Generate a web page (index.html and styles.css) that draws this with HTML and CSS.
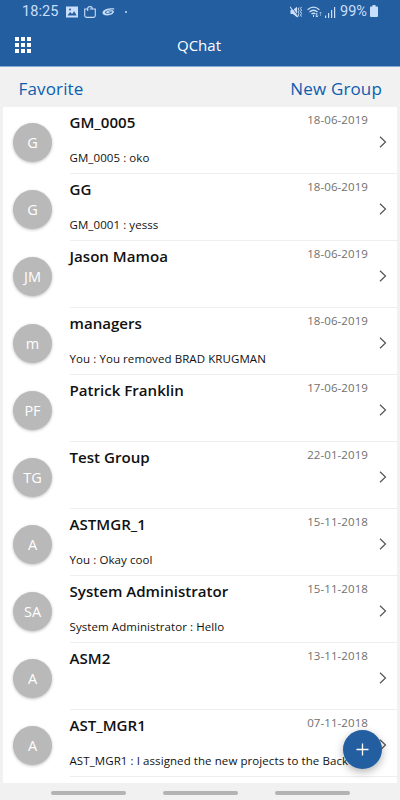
FILE: index.html
```html
<!DOCTYPE html>
<html lang="en">
<head>
<meta charset="utf-8">
<title>QChat</title>
<link rel="stylesheet" href="styles.css">
</head>
<body>
<div class="app">
  <header class="top">
    <div class="status">
      <div class="status-left">
        <span class="time">18:25</span>
        <svg class="st-image" width="12" height="12" viewBox="0 0 12 12"><path fill="#c9defa" d="M0 .5h12v11H0z"/><path fill="#235ea1" d="M1.500 9.500l2.600-3.600 2 2 2-2.600 2.600 4.200z"/><circle cx="4" cy="3.600" r="1" fill="#235ea1"/></svg>
        <svg class="st-bag" width="12" height="12" viewBox="0 0 12 12" fill="none" stroke="#c9defa" stroke-width="1.100"><path d="M3.700 3H.7v6.500q0 1.900 1.900 1.900h6.800q1.900 0 1.900-1.900V3H8.300M3.700 5V2.500Q3.700.6 6 .6t2.300 1.900V3H5.800"/></svg>
        <svg class="st-g" width="13" height="10" viewBox="0 0 13 10"><path fill="#c9defa" fill-rule="evenodd" d="M12.300 1.500C9 .8.5 2 .5 6c0 3.600 10.500 3.200 11.500-1.200.3-1.300-1.500-1.800-3.500-1.600C5.500 3.500 4 4.600 4.200 5.500c.2 1 3 .8 4.300-.3H6.300l.5-.8h3.700C10 6.900 3.200 7.700 3 5.600 2.800 3.500 8 2 12.300 2.500z"/></svg>
        <span class="dot"></span>
      </div>
      <div class="status-right">
        <svg width="13" height="12" viewBox="0 0 13 12"><path fill="#c9defa" d="M.5 4h2.300L7 .7v10.600L2.800 8H.5z"/><path d="M1.300 .5l7.500 10.500" stroke="#235ea1" stroke-width="1"/><path d="M0 .8l7.800 10.400" stroke="#c9defa" stroke-width="1.100"/><path d="M9 1.500l-1 1.500 1 1.500-1 1.500 1 1.500-1 1.500 1 1.500M11.500 1l-1 1.600 1 1.600-1 1.600 1 1.600-1 1.600 1 1.600" fill="none" stroke="#c9defa" stroke-width="1"/></svg>
        <svg class="st-wifi" width="16" height="12" viewBox="0 0 16 12" fill="none" stroke="#c9defa" stroke-width="1.300"><path d="M.6 3.800Q6.500-1.500 12.400 3.800M2.500 6Q6.500 2.500 10.500 6M4.500 8.100q2-1.700 4 0"/><path d="M6.500 9v2M9.800 7v4M8.500 9.700l1.300 1.300 1.300-1.300" stroke-width="1"/><path d="M13.500 10V6M12.300 7.300l1.200-1.300 1.200 1.300" stroke-width="1" opacity=".5"/></svg>
        <svg class="st-signal" width="11" height="12" viewBox="0 0 11 12" fill="#c9defa"><path d="M0 9.500h1.200V12H0zM3 7h1.200v5H3zM6 4h1.200v8H6zM9 1h1.200v11H9z"/></svg>
        <span class="pct">99%</span>
        <svg class="st-battery" width="8" height="12" viewBox="0 0 8 12"><path fill="#c9defa" d="M2.500 0h3v1.500H7q1 0 1 1V11q0 1-1 1H1q-1 0-1-1V2.500q0-1 1-1h1.500z"/></svg>
      </div>
    </div>
    <div class="bar">
      <svg class="grid" width="16" height="16" viewBox="0 0 16 16" fill="#fff"><path d="M0 0h4v4H0zM6 0h4v4H6zM12 0h4v4h-4zM0 6h4v4H0zM6 6h4v4H6zM12 6h4v4h-4zM0 12h4v4H0zM6 12h4v4H6zM12 12h4v4h-4z"/></svg>
      <h1 class="title">QChat</h1>
    </div>
  </header>
  <nav class="links"><a class="fav">Favorite</a><a class="new">New Group</a></nav>
  <main class="list">
    <div class="row"><div class="avatar">G</div><div class="body"><div class="text"><b class="name">GM_0005</b><p class="msg">GM_0005 : oko</p></div><time class="date">18-06-2019</time><svg class="chev" width="8" height="12" viewBox="0 0 8 12"><path d="M1 .8L6.500 6 1 11.200"/></svg></div></div>
    <div class="row"><div class="avatar">G</div><div class="body"><div class="text"><b class="name">GG</b><p class="msg">GM_0001 : yesss</p></div><time class="date">18-06-2019</time><svg class="chev" width="8" height="12" viewBox="0 0 8 12"><path d="M1 .8L6.500 6 1 11.200"/></svg></div></div>
    <div class="row"><div class="avatar">JM</div><div class="body"><div class="text"><b class="name">Jason Mamoa</b></div><time class="date">18-06-2019</time><svg class="chev" width="8" height="12" viewBox="0 0 8 12"><path d="M1 .8L6.500 6 1 11.200"/></svg></div></div>
    <div class="row"><div class="avatar">m</div><div class="body"><div class="text"><b class="name">managers</b><p class="msg">You : You removed BRAD KRUGMAN</p></div><time class="date">18-06-2019</time><svg class="chev" width="8" height="12" viewBox="0 0 8 12"><path d="M1 .8L6.500 6 1 11.200"/></svg></div></div>
    <div class="row"><div class="avatar">PF</div><div class="body"><div class="text"><b class="name">Patrick Franklin</b></div><time class="date">17-06-2019</time><svg class="chev" width="8" height="12" viewBox="0 0 8 12"><path d="M1 .8L6.500 6 1 11.200"/></svg></div></div>
    <div class="row"><div class="avatar">TG</div><div class="body"><div class="text"><b class="name">Test Group</b></div><time class="date">22-01-2019</time><svg class="chev" width="8" height="12" viewBox="0 0 8 12"><path d="M1 .8L6.500 6 1 11.200"/></svg></div></div>
    <div class="row"><div class="avatar">A</div><div class="body"><div class="text"><b class="name">ASTMGR_1</b><p class="msg">You : Okay cool</p></div><time class="date">15-11-2018</time><svg class="chev" width="8" height="12" viewBox="0 0 8 12"><path d="M1 .8L6.500 6 1 11.200"/></svg></div></div>
    <div class="row"><div class="avatar">SA</div><div class="body"><div class="text"><b class="name">System Administrator</b><p class="msg">System Administrator : Hello</p></div><time class="date">15-11-2018</time><svg class="chev" width="8" height="12" viewBox="0 0 8 12"><path d="M1 .8L6.500 6 1 11.200"/></svg></div></div>
    <div class="row"><div class="avatar">A</div><div class="body"><div class="text"><b class="name">ASM2</b></div><time class="date">13-11-2018</time><svg class="chev" width="8" height="12" viewBox="0 0 8 12"><path d="M1 .8L6.500 6 1 11.200"/></svg></div></div>
    <div class="row"><div class="avatar">A</div><div class="body"><div class="text"><b class="name">AST_MGR1</b><p class="msg">AST_MGR1 : I assigned the new projects to the Back</p></div><time class="date">07-11-2018</time><svg class="chev" width="8" height="12" viewBox="0 0 8 12"><path d="M1 .8L6.500 6 1 11.200"/></svg></div></div>
  </main>
  <footer class="nav"><i class="pill"></i><i class="pill"></i><i class="pill"></i></footer>
  <button class="fab" aria-label="New chat"><svg width="13" height="13" viewBox="0 0 13 13"><path d="M6.500 .5v12M.5 6.500h12" stroke="#fff" stroke-width="1.300"/></svg></button>
</div>
</body>
</html>
```
FILE: styles.css
```css
* { box-sizing: border-box; }
body { margin: 0; font-family: "Open Sans", sans-serif; background: #f1f1f1; }
.app { position: relative; width: 400px; height: 800px; overflow: hidden; display: flex; flex-direction: column; background: #f1f1f1; }
.top { height: 67px; background: #235ea1; border-bottom: 1px solid #87abd3; }
.status { height: 23px; display: flex; justify-content: space-between; padding: 0 22px; color: #c9defa; font: 14.5px/23px Roboto, sans-serif; }
.status-left, .status-right { display: flex; align-items: center; }
.time { letter-spacing: 0.1px; width: 44px; }
.st-bag { margin-left: 6px; }
.st-g { margin-left: 6px; }
.dot { width: 2px; height: 2px; border-radius: 1px; margin-left: 10px; background: #c9defa; }
.st-wifi { margin-left: 4px; }
.st-signal { margin-left: 2px; }
.pct { margin-left: 4px; width: 30px; }
.st-battery { margin: 0 0 1px; }
.bar { height: 43px; display: flex; align-items: center; position: relative; justify-content: center; padding-right: 2px; }
.grid { position: absolute; left: 15px; top: 14px; }
.title { margin: 0; color: #fff; font-size: 15px; font-weight: 400; line-height: 20px; }
.links { height: 40px; padding: 10px 18px 0 18.5px; display: flex; justify-content: space-between; color: #0d5db0; font-size: 17px; letter-spacing: 0.15px; line-height: 24px; }
.list { margin: 0 3px; height: 676px; background: #fff; }
.row { height: 67px; display: flex; padding-left: 10px; }
.avatar { width: 39px; height: 39px; margin: 15.5px 17.5px 0 0; border-radius: 50%; background: #b9b9b9; color: #fff; font-size: 14.5px; line-height: 39px; text-align: center; box-shadow: 0 1px 3px rgba(0,0,0,.25); flex: none; }
.body { flex: 1; min-width: 0; display: flex; border-bottom: 1px solid #eee; }
.text { flex: 1; width: 0; white-space: nowrap; color: #111; }
.name { display: block; margin-top: 5px; font-size: 15.1px; font-weight: 600; line-height: 20px; }
.msg { margin: 17px 0 0; font-size: 11.5px; letter-spacing: 0.08px; line-height: 18px; }
.date { color: #707070; font-size: 11.5px; letter-spacing: 0.08px; line-height: 16px; margin-top: 5px; }
.chev { flex: none; margin: 29px 10px 0 11px; fill: none; stroke: #555; stroke-width: 1.2; }
.nav { height: 17px; display: flex; gap: 37px; padding: 8px 0 0 51px; }
.pill { width: 75px; height: 4px; border-radius: 2px; background: #b3b3b3; }
.fab { position: absolute; left: 343px; top: 730px; width: 39px; height: 39px; border: 0; padding: 0; border-radius: 50%; background: #235ea1; display: flex; align-items: center; justify-content: center; box-shadow: 0 3px 8px rgba(0,0,0,.3); }
```
